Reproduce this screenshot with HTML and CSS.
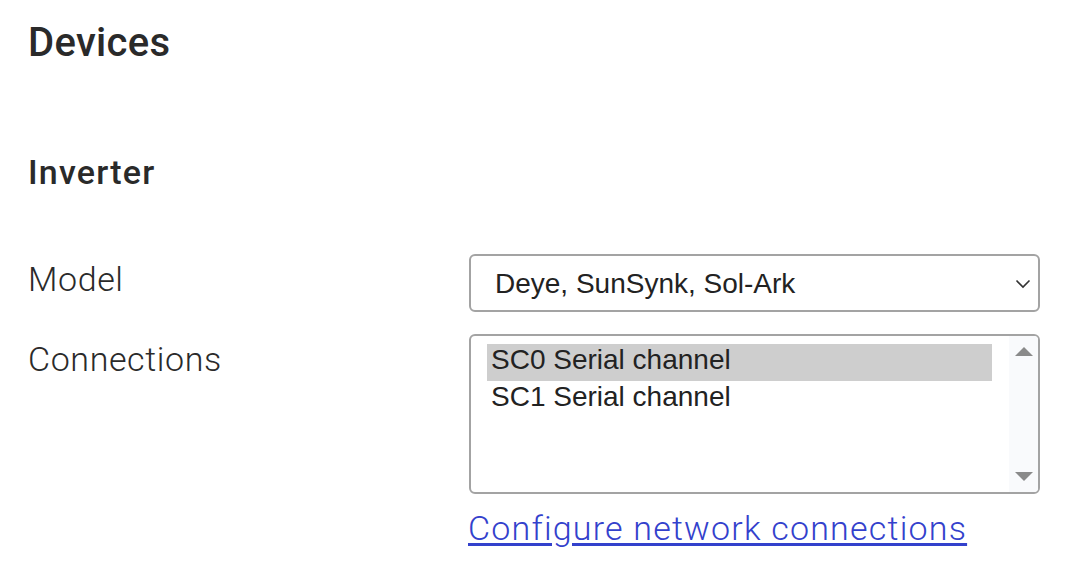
FILE: index.html
```html
<!DOCTYPE html>
<html lang="en">
<head>
    <meta charset="UTF-8">
    <meta name="viewport" content="width=device-width, initial-scale=1.0">
    <title>Devices</title>
    <link rel="stylesheet" href="styles.css">
</head>
<body>

<div class="page">
    <h1>Devices</h1>

    <h2>Inverter</h2>

    <!-- Inverter settings -->
    <div class="form-row">
        <label for="model">Model</label>
        <div class="control select-wrap">
            <select id="model" name="model">
                <option selected>Deye, SunSynk, Sol-Ark</option>
            </select>
            <svg class="chevron" width="16" height="10" viewBox="0 0 16 10">
                <path d="M1.5 1.5 L8 8 L14.5 1.5" fill="none" stroke="#333" stroke-width="1.6"/>
            </svg>
        </div>
    </div>

    <div class="form-row">
        <label>Connections</label>
        <div class="control">
            <div class="listbox">
                <ul class="options">
                    <li class="selected">SC0 Serial channel</li>
                    <li>SC1 Serial channel</li>
                </ul>
                <div class="scroll-track">
                    <span class="arrow up"></span>
                    <span class="arrow down"></span>
                </div>
            </div>
            <a href="#" class="config-link">Configure network connections</a>
        </div>
    </div>
</div>

</body>
</html>
```

FILE: styles.css
```css
body {
    margin: 0;
    padding: 0;
    background-color: #ffffff;
    color: #2a2a2a;
    font-family: Roboto, "Open Sans", sans-serif;
}
.page {
    padding: 19px 0 0 28px;
}
h1 {
    margin: 0;
    font-size: 40px;
    line-height: 48px;
    font-weight: 500;
    letter-spacing: 0.3px;
}
h2 {
    margin: 85px 0 0 0;
    font-size: 34px;
    line-height: 40px;
    font-weight: 500;
    letter-spacing: 1.2px;
}
.form-row {
    display: flex;
    margin-top: 62px;
}
.form-row + .form-row {
    margin-top: 22px;
}
.form-row label {
    width: 441px;
    padding-top: 5px;
    font-size: 34px;
    line-height: 40px;
    font-weight: 300;
    letter-spacing: 0.6px;
}
.control {
    width: 571px;
    display: flex;
    flex-direction: column;
}
.select-wrap {
    position: relative;
}
.select-wrap select {
    appearance: none;
    -webkit-appearance: none;
    width: 100%;
    height: 58px;
    margin: 0;
    padding: 0 50px 0 24px;
    font-family: "Liberation Sans", Arial, sans-serif;
    font-size: 28px;
    color: #222;
    background-color: #fff;
    border: 2px solid #a3a3a3;
    border-radius: 6px;
    box-sizing: border-box;
}
.chevron {
    position: absolute;
    right: 9px;
    top: 25px;
}
.listbox {
    display: flex;
    height: 160px;
    border: 2px solid #a3a3a3;
    border-radius: 6px;
    box-sizing: border-box;
    overflow: hidden;
}
.options {
    flex: 1;
    list-style: none;
    margin: 0;
    padding: 8px 17px 0 16px;
    font-family: "Liberation Sans", Arial, sans-serif;
    font-size: 28px;
    color: #222;
}
.options li {
    padding: 0 4px 5px 4px;
    line-height: 32px;
}
.options li.selected {
    background-color: #cecece;
}
.scroll-track {
    width: 29px;
    background-color: #f9fafc;
    display: flex;
    flex-direction: column;
    justify-content: space-between;
    align-items: center;
    padding: 11px 0 11px 0;
}
.arrow {
    width: 0;
    height: 0;
    border-left: 9px solid transparent;
    border-right: 9px solid transparent;
}
.arrow.up {
    border-bottom: 9px solid #8a8a8a;
}
.arrow.down {
    border-top: 9px solid #8a8a8a;
}
.config-link {
    margin-top: 14px;
    font-size: 34px;
    line-height: 40px;
    font-weight: 300;
    letter-spacing: 1.2px;
    color: #3341cc;
    text-decoration: underline;
    text-underline-offset: 3px;
    margin-left: -1px;
}
```
